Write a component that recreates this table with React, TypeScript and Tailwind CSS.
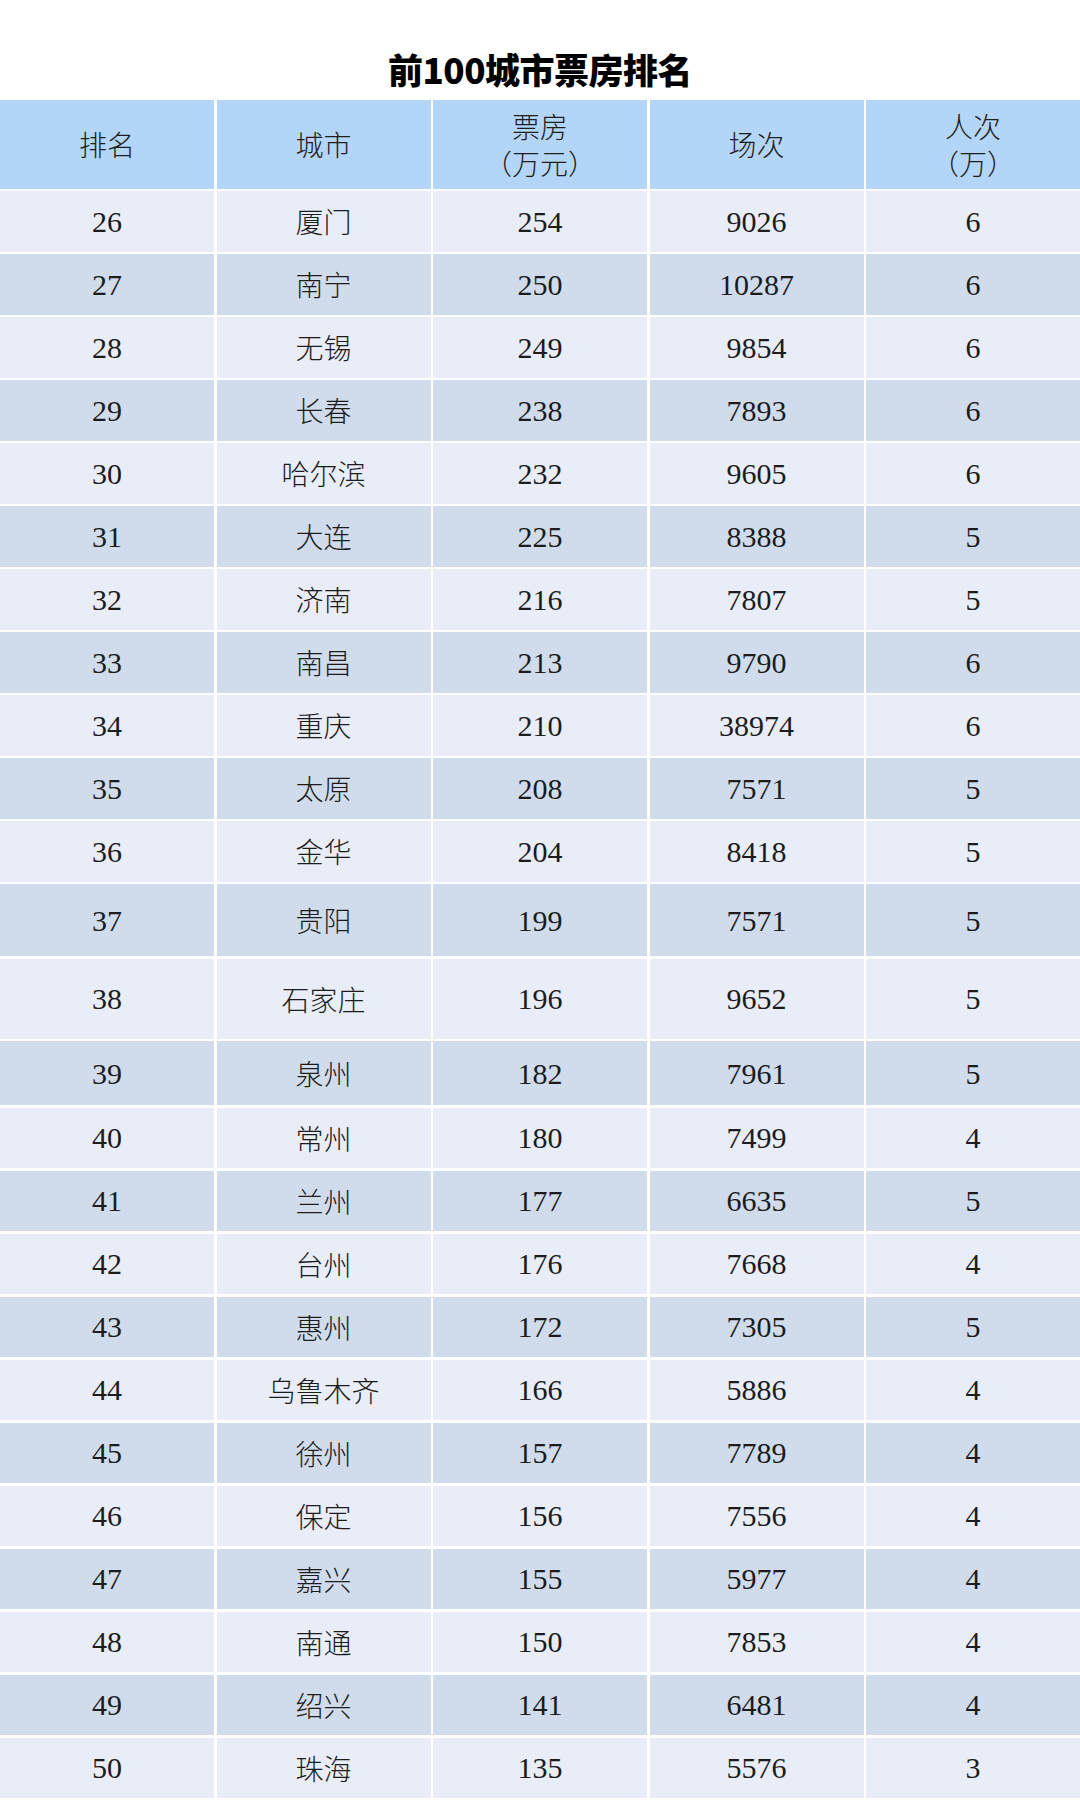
import React from "react";

type Row = { rank: number; city: string; box: number; shows: number; people: number; h: string };

const data: [number, string, number, number, number][] = [
  [26, "厦门", 254, 9026, 6],
  [27, "南宁", 250, 10287, 6],
  [28, "无锡", 249, 9854, 6],
  [29, "长春", 238, 7893, 6],
  [30, "哈尔滨", 232, 9605, 6],
  [31, "大连", 225, 8388, 5],
  [32, "济南", 216, 7807, 5],
  [33, "南昌", 213, 9790, 6],
  [34, "重庆", 210, 38974, 6],
  [35, "太原", 208, 7571, 5],
  [36, "金华", 204, 8418, 5],
  [37, "贵阳", 199, 7571, 5],
  [38, "石家庄", 196, 9652, 5],
  [39, "泉州", 182, 7961, 5],
  [40, "常州", 180, 7499, 4],
  [41, "兰州", 177, 6635, 5],
  [42, "台州", 176, 7668, 4],
  [43, "惠州", 172, 7305, 5],
  [44, "乌鲁木齐", 166, 5886, 4],
  [45, "徐州", 157, 7789, 4],
  [46, "保定", 156, 7556, 4],
  [47, "嘉兴", 155, 5977, 4],
  [48, "南通", 150, 7853, 4],
  [49, "绍兴", 141, 6481, 4],
  [50, "珠海", 135, 5576, 3],
];

const rows: Row[] = data.map(([rank, city, box, shows, people]) => ({
  rank,
  city,
  box,
  shows,
  people,
  h: rank === 37 ? "h-[72px]" : rank === 38 ? "h-[80px]" : rank === 39 ? "h-[64px]" : "h-[60.5px]",
}));

const cellFont = { fontFamily: '"Liberation Serif", "Noto Sans CJK SC", serif' };

function HeaderCell({ lines }: { lines: string[] }) {
  return (
    <div className="bg-[#b3d6f8] flex flex-col items-center justify-center text-[28px] leading-[37px] text-[#1e1e1e]">
      {lines.map((l) => (
        <span key={l}>{l}</span>
      ))}
    </div>
  );
}

export default function App() {
  return (
    <div className="w-[1080px] h-[1800px] bg-white overflow-hidden" style={cellFont}>
      <div className="h-[100px] pt-[47px] text-center">
        <h1
          className="text-[35px] leading-[44px] font-black text-black tracking-[-0.5px]"
          style={{ fontFamily: '"Noto Sans CJK SC", "Noto Sans", sans-serif' }}
        >
          前100城市票房排名
        </h1>
      </div>
      <div className="flex flex-col gap-y-[2.5px]">
        <div
          className="grid grid-cols-5 gap-x-[2.5px] h-[89px] mb-[-0.5px]"
          style={{ fontFamily: '"Noto Sans CJK SC", sans-serif', fontWeight: 300 }}
        >
          <HeaderCell lines={["排名"]} />
          <HeaderCell lines={["城市"]} />
          <HeaderCell lines={["票房", "（万元）"]} />
          <HeaderCell lines={["场次"]} />
          <HeaderCell lines={["人次", "（万）"]} />
        </div>
        {rows.map((r, i) => {
          const bg = i % 2 === 0 ? "bg-[#e9edf7]" : "bg-[#d0dcec]";
          return (
            <div key={r.rank} className={`grid grid-cols-5 gap-x-[2.5px] ${r.h}`}>
              <div className={`${bg} flex items-center justify-center text-[30px] text-[#1c1c1c]`}>{r.rank}</div>
              <div
                className={`${bg} flex items-center justify-center text-[28px] text-[#1c1c1c]`}
                style={{ fontFamily: '"Noto Sans CJK SC", serif', fontWeight: 300 }}
              >
                {r.city}
              </div>
              <div className={`${bg} flex items-center justify-center text-[30px] text-[#1c1c1c]`}>{r.box}</div>
              <div className={`${bg} flex items-center justify-center text-[30px] text-[#1c1c1c]`}>{r.shows}</div>
              <div className={`${bg} flex items-center justify-center text-[30px] text-[#1c1c1c]`}>{r.people}</div>
            </div>
          );
        })}
      </div>
    </div>
  );
}
